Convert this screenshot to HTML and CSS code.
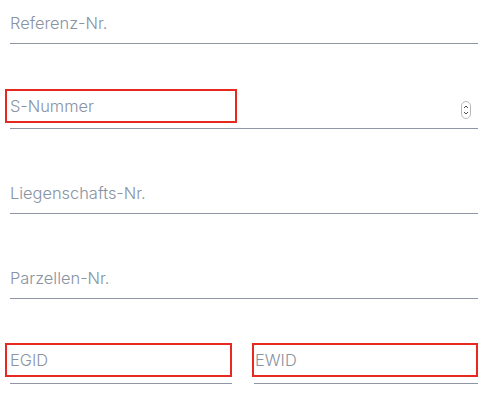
FILE: index.html
```html
<!DOCTYPE html>
<html lang="de">
<head>
<meta charset="utf-8">
<title>Formular</title>
<link rel="stylesheet" href="styles.css">
</head>
<body>
<form class="form">
  <div class="field">
    <div class="row"><span class="ph">Referenz-Nr.</span></div>
  </div>
  <div class="field">
    <div class="row">
      <span class="ph box box-wide">S-Nummer</span>
      <svg class="spinner" width="10" height="18" viewBox="0 0 10 18" aria-hidden="true">
        <rect x="0.5" y="0.5" width="9" height="17" rx="4.5" ry="4.5" fill="#fff" stroke="#b9b9b9"/>
        <path d="M3 7 L5 5 L7 7" fill="none" stroke="#4a4a4a" stroke-width="1"/>
        <path d="M3 11 L5 13 L7 11" fill="none" stroke="#4a4a4a" stroke-width="1"/>
      </svg>
    </div>
  </div>
  <div class="field">
    <div class="row"><span class="ph">Liegenschafts-Nr.</span></div>
  </div>
  <div class="field">
    <div class="row"><span class="ph">Parzellen-Nr.</span></div>
  </div>
  <div class="pair">
    <div class="field">
      <div class="row"><span class="ph box box-left">EGID</span></div>
    </div>
    <div class="field">
      <div class="row"><span class="ph box box-right">EWID</span></div>
    </div>
  </div>
</form>
</body>
</html>
```
FILE: styles.css
```css
* { box-sizing: border-box; }
html, body { margin: 0; padding: 0; background: #ffffff; }
body {
  font-family: "Inter", "Liberation Sans", sans-serif;
  width: 493px;
  height: 414px;
  overflow: hidden;
}
.form {
  display: flex;
  flex-direction: column;
  gap: 41px;
  padding: 0 15px 0 10px;
}
.field {
  height: 44px;
  border-bottom: 1px solid #8e97a3;
}
.row {
  height: 43px;
  display: flex;
  align-items: flex-start;
  justify-content: space-between;
}
.ph {
  display: block;
  font-size: 16.4px;
  font-weight: 300;
  line-height: 20px;
  padding-top: 13px;
  color: #8893a3;
  white-space: nowrap;
}
.box {
  border: 2px solid #e8291f;
  height: 34px;
  line-height: 30px;
  padding-top: 0;
}
.box-wide {
  margin-top: 4px;
  margin-left: -5px;
  width: 232px;
  padding-left: 3px;
}
.box-left {
  margin-top: 3px;
  margin-left: -5px;
  width: 227px;
  padding-left: 3px;
}
.box-right {
  margin-top: 3px;
  margin-left: -2px;
  width: 227px;
  padding-left: 1px;
}
.spinner {
  margin-top: 16px;
  margin-right: 7px;
}
.pair {
  display: grid;
  grid-template-columns: 222px 224px;
  column-gap: 22px;
}
```
